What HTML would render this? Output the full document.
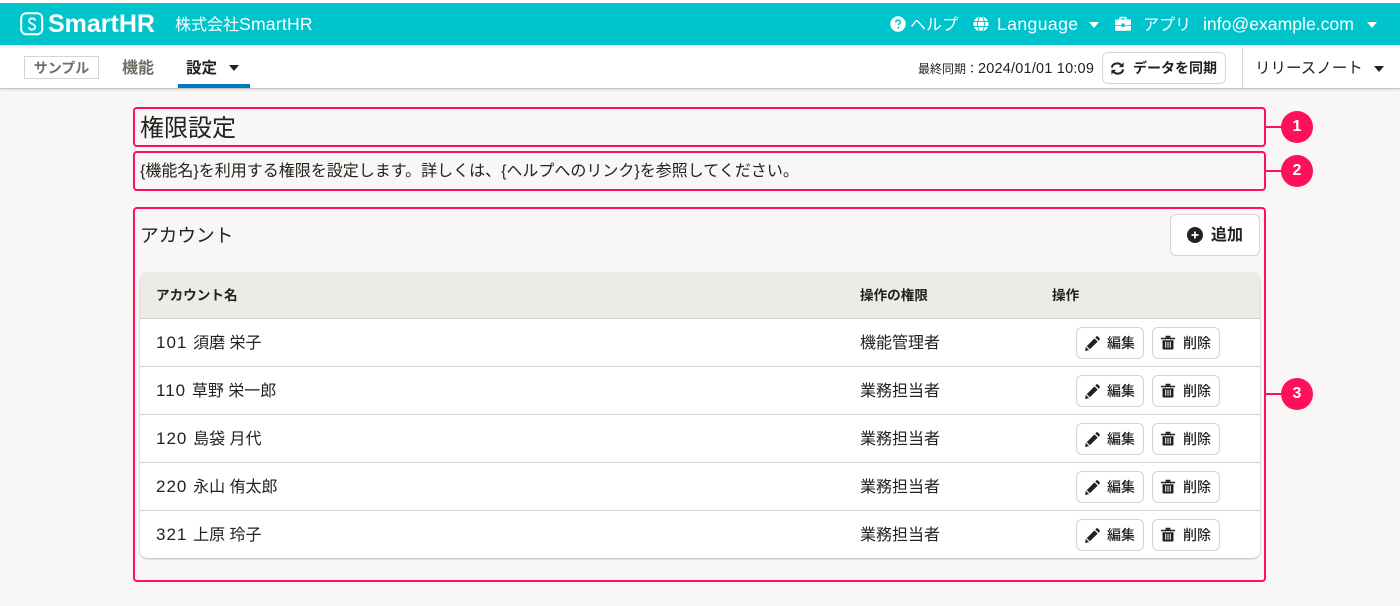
<!DOCTYPE html>
<html lang="ja">
<head>
<meta charset="utf-8">
<style>
html,body{margin:0;padding:0}
body{width:1400px;height:606px;position:relative;overflow:hidden;background:#f8f7f6;color:#23221e;font-family:"Liberation Sans","Noto Sans CJK JP",sans-serif}
.a{position:absolute;white-space:nowrap}
.t{position:absolute;white-space:nowrap;line-height:20px}
.tri{position:absolute;width:0;height:0;border-left:5px solid transparent;border-right:5px solid transparent;border-top:6px solid currentColor}
.box{position:absolute;border:2px solid #ff0f5c;border-radius:4px;box-sizing:border-box}
.num{position:absolute;width:32px;height:32px;border-radius:50%;background:#ff0f5c;color:#fff;font-size:16px;font-weight:700;text-align:center;line-height:32px}
.ln{position:absolute;height:2px;background:#ff0f5c;width:17px}
.btn{position:absolute;box-sizing:border-box;background:#fff;border:1px solid #d6d3d0;border-radius:6px}
.row{position:absolute;left:140px;width:1120px;height:48px;background:#fff;border-bottom:1px solid #d6d3d0;box-sizing:border-box}
.n{font-size:16px}
.n b{font-weight:400;font-size:17px;letter-spacing:1px}
.s{font-size:13.6px;font-weight:700}
.m{font-size:14px;font-weight:500}
</style>
</head>
<body>
<div class="a" style="left:0;top:0;width:1400px;height:3px;background:#fff"></div>
<div class="a" style="left:0;top:3px;width:1400px;height:42px;background:#00c4cc"></div>
<div class="a" style="left:0;top:45px;width:1400px;height:43px;background:#fff;border-bottom:1px solid #c9c6c3;box-shadow:0 1px 2px rgba(0,0,0,.12)"></div>
<div class="a" style="left:0;top:45px;width:1400px;height:3px;background:#f8f7f6"></div>

<svg class="a" style="left:20px;top:12px" width="24" height="24" viewBox="0 0 24 24" fill="none"><rect x="1.200" y="1.200" width="21" height="21" rx="5" stroke="#fff" stroke-width="2"/><path d="M15.300 8.600C15 7 13.800 6.300 12.100 6.300 10.200 6.300 9 7.300 9 8.900c0 3.200 6.200 2.600 6.200 6 0 1.600-1.300 2.700-3.200 2.700-1.800 0-3-.8-3.300-2.400" stroke="#fff" stroke-width="1.800"/></svg>
<div class="t" style="left:48px;top:12px;font-size:25px;font-weight:700;color:#fff;line-height:24px">SmartHR</div>
<div class="t" style="left:175px;top:14px;font-size:16px;color:#fff">株式会社<span style="font-size:17.600px;letter-spacing:.2px">SmartHR</span></div>

<svg class="a" style="left:890px;top:16px" width="16" height="16" viewBox="0 0 16 16"><circle cx="8" cy="8" r="7.700" fill="#fff"/><path d="M5.700 6.300C5.800 4.900 6.800 4.200 8.100 4.200c1.300 0 2.300.8 2.300 1.900 0 1.700-2 1.600-2 3.300" fill="none" stroke="#00c4cc" stroke-width="1.600"/><circle cx="8.300" cy="11.700" r="1" fill="#00c4cc"/></svg>
<div class="t" style="left:910px;top:16px;font-size:16px;color:#fff">ヘルプ</div>
<svg class="a" style="left:973px;top:16px" width="16" height="16" viewBox="0 0 16 16" fill="none" stroke="#fff"><circle cx="8" cy="8" r="7.500" fill="#fff" stroke="none"/><ellipse cx="8" cy="8" rx="3.500" ry="7.500" stroke="#00c4cc" stroke-width="1"/><path d="M0 5.500h16M0 10.500h16" stroke="#00c4cc" stroke-width="1"/></svg>
<div class="t" style="left:997px;top:14px;font-size:17.600px;color:#fff;letter-spacing:.4px">Language</div>
<div class="tri" style="left:1089px;top:22px;color:#fff"></div>
<svg class="a" style="left:1115px;top:16px" width="16" height="16" viewBox="0 0 16 16"><path d="M5 4V2.500C5 1.800 5.500 1.500 6 1.500h4c.5 0 1 .3 1 1V4" fill="none" stroke="#fff" stroke-width="1.500"/><rect y="3.500" width="16" height="5.500" rx="1" fill="#fff"/><rect y="9.800" width="16" height="5" rx="1" fill="#fff"/><rect x="6.500" y="7.500" width="3" height="3.500" fill="#00c4cc"/></svg>
<div class="t" style="left:1143px;top:16px;font-size:16px;color:#fff">アプリ</div>
<div class="t" style="left:1203px;top:14px;font-size:17.600px;color:#fff">info@example.com</div>
<div class="tri" style="left:1367px;top:22px;color:#fff"></div>

<div class="a" style="left:24px;top:56px;width:75px;height:23px;box-sizing:border-box;border:1px solid #d6d3d0;text-align:center;font-size:14px;font-weight:700;color:#706d65;line-height:22px">サンプル</div>
<div class="t" style="left:122px;top:59px;font-size:16px;font-weight:700;color:#706d65">機能</div>
<div class="t" style="left:186px;top:59px;font-size:15.500px;font-weight:700;color:#23221e">設定</div>
<div class="tri" style="left:229px;top:65px;color:#23221e"></div>
<div class="a" style="left:178px;top:84px;width:72px;height:4px;background:#0077c7"></div>

<div class="t" style="left:918px;top:59px;font-size:12px;color:#23221e">最終同期：</div>
<div class="t" style="left:978px;top:59px;font-size:14.500px;letter-spacing:.2px;color:#23221e">2024/01/01 10:09</div>
<div class="btn" style="left:1102px;top:52px;width:124px;height:32px"></div>
<svg class="a" style="left:1110px;top:61px" width="15" height="15" viewBox="0 0 16 16" fill="none" stroke="#23221e" stroke-width="2.200"><path d="M2 7C2.500 4 5 2.500 8 2.500c2 0 3.500 1 4.500 2.500"/><path d="M14 9c-.5 3-3 4.500-6 4.500-2 0-3.500-1-4.500-2.500"/><path d="M14.500 1.500v5h-5z" fill="#23221e" stroke="none"/><path d="M1.500 14.500v-5h5z" fill="#23221e" stroke="none"/></svg>
<div class="t" style="left:1133px;top:58px;font-size:14px;font-weight:700">データを同期</div>
<div class="a" style="left:1242px;top:48px;width:1px;height:40px;background:#d6d3d0"></div>
<div class="t" style="left:1255px;top:59px;font-size:15.500px;color:#23221e">リリースノート</div>
<div class="tri" style="left:1374px;top:66px;color:#23221e"></div>

<div class="box" style="left:133px;top:107px;width:1133px;height:40px"></div>
<div class="t" style="left:140px;top:115px;font-size:24px;line-height:28px">権限設定</div>
<div class="box" style="left:133px;top:151px;width:1133px;height:40px"></div>
<div class="t" style="left:140px;top:162px;font-size:16px">{機能名}を利用する権限を設定します。詳しくは、{ヘルプへのリンク}を参照してください。</div>
<div class="box" style="left:133px;top:207px;width:1133px;height:375px"></div>
<div class="t" style="left:140px;top:224px;font-size:18.700px;line-height:24px">アカウント</div>

<div class="ln" style="left:1266px;top:126px"></div><div class="num" style="left:1281px;top:111px">1</div>
<div class="ln" style="left:1266px;top:170px"></div><div class="num" style="left:1281px;top:155px">2</div>
<div class="ln" style="left:1266px;top:393px"></div><div class="num" style="left:1281px;top:378px">3</div>

<div class="btn" style="left:1170px;top:214px;width:90px;height:42px"></div>
<svg class="a" style="left:1187px;top:227px" width="16" height="16" viewBox="0 0 16 16"><circle cx="8" cy="8" r="8" fill="#23221e"/><path d="M8 4.500v7M4.500 8h7" stroke="#fff" stroke-width="1.800"/></svg>
<div class="t" style="left:1211px;top:226px;font-size:16px;font-weight:700">追加</div>

<div class="a" style="left:140px;top:272px;width:1120px;height:286px;border-radius:8px;box-shadow:0 1px 2px rgba(0,0,0,.25)"></div>
<div class="a" style="left:140px;top:272px;width:1120px;height:47px;background:#edebe8;border-radius:8px 8px 0 0;border-bottom:1px solid #d6d3d0;box-sizing:border-box"></div>
<div class="t s" style="left:156px;top:286px">アカウント名</div>
<div class="t s" style="left:860px;top:286px">操作の権限</div>
<div class="t s" style="left:1052px;top:286px">操作</div>

<div class="row" style="top:319px"></div>
<div class="row" style="top:367px"></div>
<div class="row" style="top:415px"></div>
<div class="row" style="top:463px"></div>
<div class="row" style="top:511px;height:47px;border:0;border-radius:0 0 8px 8px"></div>

<div class="t n" style="left:156px;top:333px"><b>101 </b>須磨 栄子</div><div class="t n" style="left:860px;top:334px">機能管理者</div>
<div class="t n" style="left:156px;top:381px"><b>110 </b>草野 栄一郎</div><div class="t n" style="left:860px;top:382px">業務担当者</div>
<div class="t n" style="left:156px;top:429px"><b>120 </b>島袋 月代</div><div class="t n" style="left:860px;top:430px">業務担当者</div>
<div class="t n" style="left:156px;top:477px"><b>220 </b>永山 侑太郎</div><div class="t n" style="left:860px;top:478px">業務担当者</div>
<div class="t n" style="left:156px;top:525px"><b>321 </b>上原 玲子</div><div class="t n" style="left:860px;top:526px">業務担当者</div>

<svg width="0" height="0" style="position:absolute"><defs>
<symbol id="pen" viewBox="0 0 14 14"><path d="M0 14l.8-3.800 3 3zM1.600 9.400L8.800 2.200l3 3L4.600 12.400zM9.600 1.400l1-1c.4-.4 1-.4 1.400 0l1.600 1.600c.4.4.4 1 0 1.400l-1 1z" fill="#23221e"/></symbol>
<symbol id="bin" viewBox="0 0 14 14"><path d="M0 2.300h14v1.400H0zM4.500.3h5v1.800h-5zM1.500 4.800h11V13c0 .6-.4 1-1 1h-9c-.6 0-1-.4-1-1z" fill="#23221e"/><path d="M4.700 6.300v6M7 6.300v6M9.300 6.300v6" stroke="#fff" stroke-width="1"/></symbol>
</defs></svg>

<div class="btn" style="left:1076px;top:327px;width:68px;height:32px"></div><svg class="a" style="left:1085px;top:336px" width="15" height="15"><use href="#pen"/></svg><div class="t m" style="left:1107px;top:333px">編集</div><div class="btn" style="left:1152px;top:327px;width:68px;height:32px"></div><svg class="a" style="left:1161px;top:335px" width="14" height="15"><use href="#bin"/></svg><div class="t m" style="left:1183px;top:333px">削除</div>
<div class="btn" style="left:1076px;top:375px;width:68px;height:32px"></div><svg class="a" style="left:1085px;top:384px" width="15" height="15"><use href="#pen"/></svg><div class="t m" style="left:1107px;top:381px">編集</div><div class="btn" style="left:1152px;top:375px;width:68px;height:32px"></div><svg class="a" style="left:1161px;top:383px" width="14" height="15"><use href="#bin"/></svg><div class="t m" style="left:1183px;top:381px">削除</div>
<div class="btn" style="left:1076px;top:423px;width:68px;height:32px"></div><svg class="a" style="left:1085px;top:432px" width="15" height="15"><use href="#pen"/></svg><div class="t m" style="left:1107px;top:429px">編集</div><div class="btn" style="left:1152px;top:423px;width:68px;height:32px"></div><svg class="a" style="left:1161px;top:431px" width="14" height="15"><use href="#bin"/></svg><div class="t m" style="left:1183px;top:429px">削除</div>
<div class="btn" style="left:1076px;top:471px;width:68px;height:32px"></div><svg class="a" style="left:1085px;top:480px" width="15" height="15"><use href="#pen"/></svg><div class="t m" style="left:1107px;top:477px">編集</div><div class="btn" style="left:1152px;top:471px;width:68px;height:32px"></div><svg class="a" style="left:1161px;top:479px" width="14" height="15"><use href="#bin"/></svg><div class="t m" style="left:1183px;top:477px">削除</div>
<div class="btn" style="left:1076px;top:519px;width:68px;height:32px"></div><svg class="a" style="left:1085px;top:528px" width="15" height="15"><use href="#pen"/></svg><div class="t m" style="left:1107px;top:525px">編集</div><div class="btn" style="left:1152px;top:519px;width:68px;height:32px"></div><svg class="a" style="left:1161px;top:527px" width="14" height="15"><use href="#bin"/></svg><div class="t m" style="left:1183px;top:525px">削除</div>
</body>
</html>
